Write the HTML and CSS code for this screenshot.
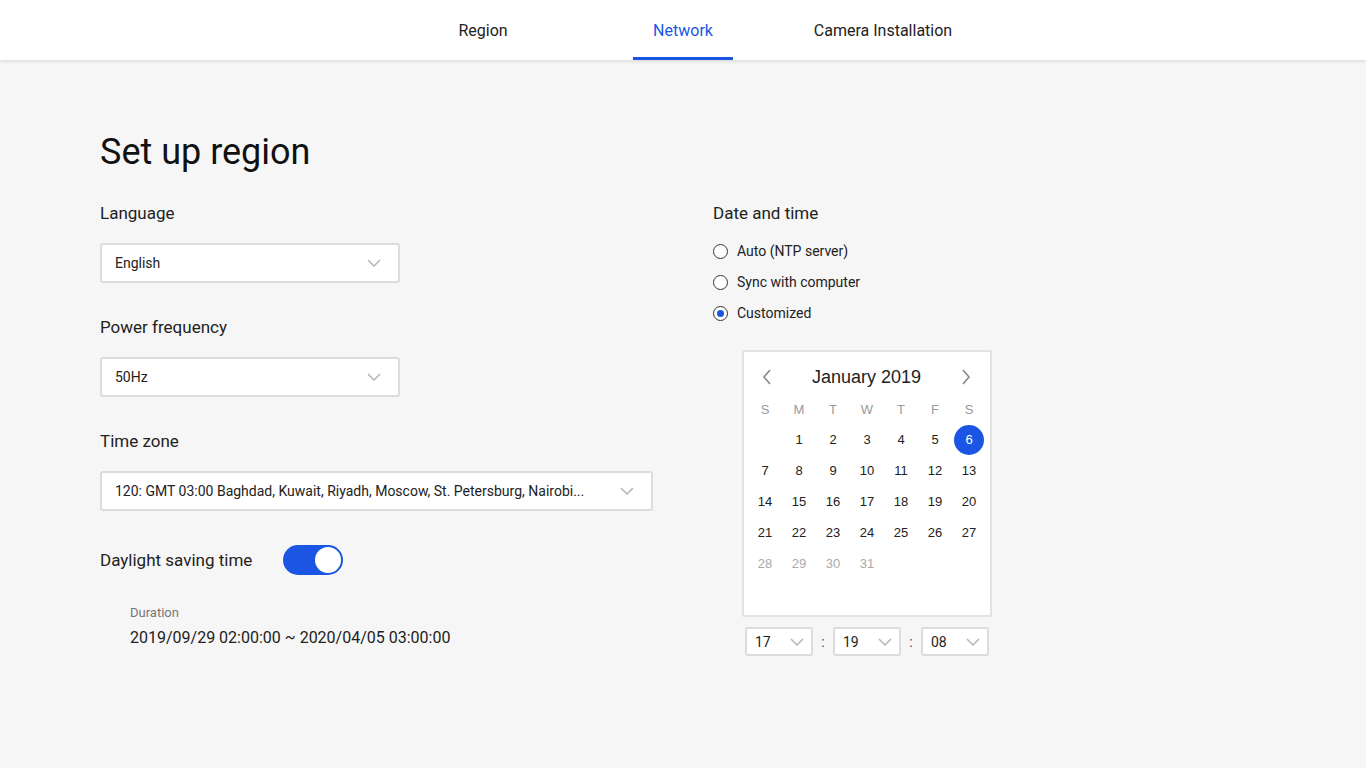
FILE: index.html
```html
<!DOCTYPE html>
<html lang="en">
<head>
<meta charset="utf-8">
<title>Set up region</title>
<link rel="stylesheet" href="styles.css">
</head>
<body>
<header class="topbar">
  <nav class="tabs">
    <div class="tab">Region</div>
    <div class="tab active">Network</div>
    <div class="tab">Camera Installation</div>
  </nav>
</header>
<main class="page">
  <h1 class="title">Set up region</h1>
  <div class="columns">
    <section class="col-left">
      <div class="field">
        <div class="label">Language</div>
        <div class="select w300"><span>English</span><svg class="chev" width="14" height="8" viewBox="0 0 14 8"><polyline points="1,1 7,7 13,1" fill="none" stroke="#b5b5b5" stroke-width="1.5"/></svg></div>
      </div>
      <div class="field">
        <div class="label">Power frequency</div>
        <div class="select w300"><span>50Hz</span><svg class="chev" width="14" height="8" viewBox="0 0 14 8"><polyline points="1,1 7,7 13,1" fill="none" stroke="#b5b5b5" stroke-width="1.5"/></svg></div>
      </div>
      <div class="field">
        <div class="label">Time zone</div>
        <div class="select w553"><span>120: GMT 03:00 Baghdad, Kuwait, Riyadh, Moscow, St. Petersburg, Nairobi...</span><svg class="chev" width="14" height="8" viewBox="0 0 14 8"><polyline points="1,1 7,7 13,1" fill="none" stroke="#b5b5b5" stroke-width="1.5"/></svg></div>
      </div>
      <div class="dst-row">
        <div class="label inline">Daylight saving time</div>
        <div class="toggle"><div class="knob"></div></div>
      </div>
      <div class="duration">
        <div class="dur-label">Duration</div>
        <div class="dur-value">2019/09/29 02:00:00 ~ 2020/04/05 03:00:00</div>
      </div>
    </section>
    <section class="col-right">
      <div class="label">Date and time</div>
      <div class="radios">
        <div class="radio"><span class="dot"></span>Auto (NTP server)</div>
        <div class="radio"><span class="dot"></span>Sync with computer</div>
        <div class="radio"><span class="dot checked"></span>Customized</div>
      </div>
      <div class="calendar">
        <div class="cal-head">
          <svg class="arrow" width="10" height="16" viewBox="0 0 10 16"><polyline points="8,1 2,8 8,15" fill="none" stroke="#888" stroke-width="1.6"/></svg>
          <span class="month">January 2019</span>
          <svg class="arrow" width="10" height="16" viewBox="0 0 10 16"><polyline points="2,1 8,8 2,15" fill="none" stroke="#888" stroke-width="1.6"/></svg>
        </div>
        <div class="cal-grid weekdays">
          <span>S</span><span>M</span><span>T</span><span>W</span><span>T</span><span>F</span><span>S</span>
        </div>
        <div class="cal-grid days">
          <span></span><span>1</span><span>2</span><span>3</span><span>4</span><span>5</span><span class="sel"><b>6</b></span>
          <span>7</span><span>8</span><span>9</span><span>10</span><span>11</span><span>12</span><span>13</span>
          <span>14</span><span>15</span><span>16</span><span>17</span><span>18</span><span>19</span><span>20</span>
          <span>21</span><span>22</span><span>23</span><span>24</span><span>25</span><span>26</span><span>27</span>
          <span class="off">28</span><span class="off">29</span><span class="off">30</span><span class="off">31</span>
        </div>
      </div>
      <div class="time-row">
        <div class="tsel"><span>17</span><svg class="chev" width="14" height="8" viewBox="0 0 14 8"><polyline points="1,1 7,7 13,1" fill="none" stroke="#b5b5b5" stroke-width="1.5"/></svg></div>
        <span class="colon">:</span>
        <div class="tsel"><span>19</span><svg class="chev" width="14" height="8" viewBox="0 0 14 8"><polyline points="1,1 7,7 13,1" fill="none" stroke="#b5b5b5" stroke-width="1.5"/></svg></div>
        <span class="colon">:</span>
        <div class="tsel"><span>08</span><svg class="chev" width="14" height="8" viewBox="0 0 14 8"><polyline points="1,1 7,7 13,1" fill="none" stroke="#b5b5b5" stroke-width="1.5"/></svg></div>
      </div>
    </section>
  </div>
</main>
</body>
</html>
```
FILE: styles.css
```css
* { box-sizing: border-box; }
html, body { margin: 0; padding: 0; }
body {
  background: #f6f6f6;
  font-family: Roboto, "Liberation Sans", Arial, sans-serif;
  color: #222;
  width: 1366px;
  height: 768px;
  overflow: hidden;
}
.topbar {
  height: 60px;
  background: #fff;
  box-shadow: 0 1px 4px rgba(0,0,0,0.14);
  display: flex;
  justify-content: center;
  position: relative;
  z-index: 1;
}
.tabs { display: flex; }
.tab {
  width: 200px;
  height: 60px;
  display: flex;
  align-items: center;
  justify-content: center;
  font-size: 16px;
  color: #222;
  position: relative;
}
.tab.active { color: #1a56e3; }
.tab.active::after {
  content: "";
  position: absolute;
  left: 50px;
  width: 100px;
  bottom: 0;
  height: 3px;
  background: #1a56e3;
}
.page { padding: 70px 0 0 100px; }
.title {
  margin: 0;
  font-size: 36px;
  line-height: 44px;
  font-weight: 400;
  color: #111;
}
.columns {
  display: grid;
  grid-template-columns: 553px 300px;
  column-gap: 60px;
  margin-top: 29px;
}
.label {
  font-size: 17px;
  line-height: 20px;
  color: #222;
}
.field { margin-bottom: 34px; }
.field .label { margin-bottom: 20px; }
.select {
  height: 40px;
  background: #fff;
  border: 2px solid #dcdcdc;
  border-radius: 3px;
  display: flex;
  align-items: center;
  justify-content: space-between;
  padding: 0 17px 0 13px;
  font-size: 14px;
  color: #222;
}
.w300 { width: 300px; }
.w553 { width: 553px; }
.chev { flex: none; }
.dst-row {
  display: flex;
  align-items: center;
  height: 30px;
}
.label.inline { width: 183px; }
.toggle {
  width: 60px;
  height: 30px;
  border-radius: 15px;
  background: #1a56e3;
  display: flex;
  align-items: center;
  justify-content: flex-end;
  padding: 2px;
}
.knob {
  width: 26px;
  height: 26px;
  border-radius: 50%;
  background: #fff;
}
.duration { padding: 29px 0 0 30px; }
.dur-label {
  font-size: 13px;
  line-height: 18px;
  color: #777;
}
.dur-value {
  margin-top: 6px;
  font-size: 16px;
  line-height: 20px;
  color: #222;
}
.radios {
  display: flex;
  flex-direction: column;
  gap: 11px;
  margin-top: 18px;
}
.radio {
  display: flex;
  align-items: center;
  height: 20px;
  font-size: 14px;
  color: #222;
}
.dot {
  width: 15px;
  height: 15px;
  border: 1.5px solid #333;
  border-radius: 50%;
  margin-right: 9px;
  background: #fff;
  display: flex;
  align-items: center;
  justify-content: center;
}
.dot.checked::after {
  content: "";
  width: 7px;
  height: 7px;
  border-radius: 50%;
  background: #1a56e3;
}
.calendar {
  margin: 27px 0 0 29px;
  width: 250px;
  height: 267px;
  background: #fff;
  border: 2px solid #e2e2e2;
  border-radius: 2px;
  padding: 8px 4px;
  font-family: "Liberation Sans", Arial, sans-serif;
}
.cal-head {
  height: 34px;
  display: flex;
  align-items: center;
  justify-content: space-between;
  padding: 0 15px 0 14px;
}
.month { font-size: 18px; color: #222; }
.cal-grid {
  display: grid;
  grid-template-columns: repeat(7, 34px);
}
.cal-grid span {
  display: flex;
  align-items: center;
  justify-content: center;
}
.weekdays span { height: 30px; font-size: 13px; color: #999; }
.days span { height: 31px; font-size: 13px; color: #222; }
.days span.off { color: #aaa; }
.days span.sel b {
  font-weight: 400;
  width: 30px;
  height: 30px;
  border-radius: 50%;
  background: #1a56e3;
  color: #fff;
  display: flex;
  align-items: center;
  justify-content: center;
}
.time-row {
  display: flex;
  align-items: center;
  margin: 10px 0 0 32px;
}
.tsel {
  width: 68px;
  height: 29px;
  background: #fff;
  border: 2px solid #dcdcdc;
  border-radius: 3px;
  display: flex;
  align-items: center;
  justify-content: space-between;
  padding: 0 7px 0 8px;
  font-size: 14px;
  color: #222;
}
.colon {
  width: 20px;
  text-align: center;
  font-size: 14px;
  color: #444;
}
```
